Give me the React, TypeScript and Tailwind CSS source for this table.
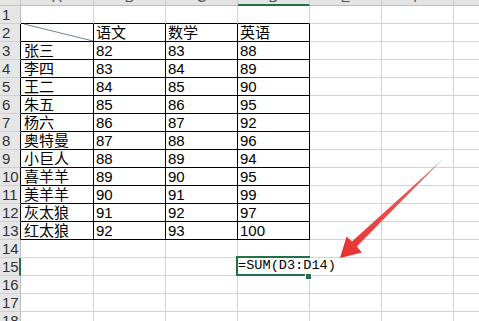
import React from 'react';

const colLetters = ['A', 'B', 'C', 'D', 'E', 'F', 'G'];
const colW = ['w-[73px]', 'w-[72px]', 'w-[72px]', 'w-[72px]', 'w-[72px]', 'w-[72px]', 'w-[72px]'];

const data: string[][] = [
  [],
  ['', '语文', '数学', '英语'],
  ['张三', '82', '83', '88'],
  ['李四', '83', '84', '89'],
  ['王二', '84', '85', '90'],
  ['朱五', '85', '86', '95'],
  ['杨六', '86', '87', '92'],
  ['奥特曼', '87', '88', '96'],
  ['小巨人', '88', '89', '94'],
  ['喜羊羊', '89', '90', '95'],
  ['美羊羊', '90', '91', '99'],
  ['灰太狼', '91', '92', '97'],
  ['红太狼', '92', '93', '100'],
];

const font = { fontFamily: '"Liberation Sans", "Noto Sans CJK SC", sans-serif' };

function Cell({ r, c }: { r: number; c: number }) {
  const inTable = r >= 2 && r <= 13 && c <= 3;
  const right = inTable ? 'border-r-black' : 'border-r-[#d4d4d4]';
  const bottom = r >= 1 && r <= 13 && c <= 3 ? 'border-b-black' : 'border-b-[#d4d4d4]';
  const text = data[r - 1]?.[c] ?? '';
  return (
    <div
      className={`${colW[c]} h-[18px] shrink-0 box-border border-r border-b ${right} ${bottom} flex items-center ${
        c === 0 ? 'pl-[3px]' : 'pl-[2px]'
      } text-[15px] leading-none text-black whitespace-nowrap overflow-hidden`}
    >
      {text}
    </div>
  );
}

export default function App() {
  const rows = Array.from({ length: 18 }, (_, i) => i + 1);
  return (
    <div className="relative w-[479px] h-[321px] overflow-hidden bg-white" style={font}>
      {/* column header */}
      <div className="flex h-[6px]">
        <div className="w-[21px] shrink-0 h-[6px] bg-[#e4e4e4] border-r border-b border-[#c4c4c4] box-border" />
        {colLetters.map((l, i) => (
          <div
            key={l}
            className={`${colW[i]} shrink-0 h-[6px] overflow-hidden box-border bg-[#e4e4e4] border-r border-[#cfcfcf] ${
              i === 3 ? 'border-b-2 border-b-[#217346] bg-[#dadada]' : 'border-b border-b-[#bdbdbd]'
            }`}
          >
            <div className="h-[20px] -mt-[13px] flex items-center justify-center text-[14px] text-[#555]">{l}</div>
          </div>
        ))}
      </div>

      {rows.map((r) => (
        <div key={r} className="flex h-[18px]">
          <div
            className={`w-[21px] shrink-0 h-[18px] box-border border-b border-b-[#d0d0d0] bg-[#e6e6e6] pl-[2px] flex items-center text-[15px] leading-none text-[#333] ${
              r === 15
                ? 'border-r-2 border-r-[#217346] bg-[#dedede]'
                : r >= 2 && r <= 13
                ? 'border-r border-r-black'
                : 'border-r border-r-[#bdbdbd]'
            }`}
          >
            {r}
          </div>
          {colLetters.map((_, c) => (
            <Cell key={c} r={r} c={c} />
          ))}
        </div>
      ))}

      {/* diagonal in A2 */}
      <svg className="absolute left-0 top-0 pointer-events-none" width="479" height="321">
        <line x1="24" y1="24" x2="93" y2="41" stroke="#6b8796" strokeWidth="1" />
      </svg>

      {/* active cell D15 */}
      <div className="absolute left-[236px] top-[256px] w-[74px] h-[20px] border-2 border-[#217346] box-border" />
      <div className="absolute left-[305px] top-[273px] w-[5px] h-[5px] bg-[#217346] border border-white box-content" />
      <div
        className="absolute left-[238px] top-[258px] h-[16px] pr-[2px] bg-white flex items-center text-[13.6px] leading-none text-black whitespace-nowrap"
        style={{ fontFamily: '"Liberation Mono", monospace' }}
      >
        =SUM(D3:D14)
      </div>

      {/* red arrow */}
      <svg className="absolute left-0 top-0 pointer-events-none" width="479" height="321">
        <defs>
          <linearGradient id="arr" x1="340" y1="258" x2="443" y2="159" gradientUnits="userSpaceOnUse">
            <stop offset="0" stopColor="#e8302e" />
            <stop offset="1" stopColor="#f06a6a" />
          </linearGradient>
        </defs>
        <polygon
          points="340,258 346.5,236.5 352,241.6 443,159 356.8,246.6 362,252.5"
          fill="url(#arr)"
        />
      </svg>
    </div>
  );
}
